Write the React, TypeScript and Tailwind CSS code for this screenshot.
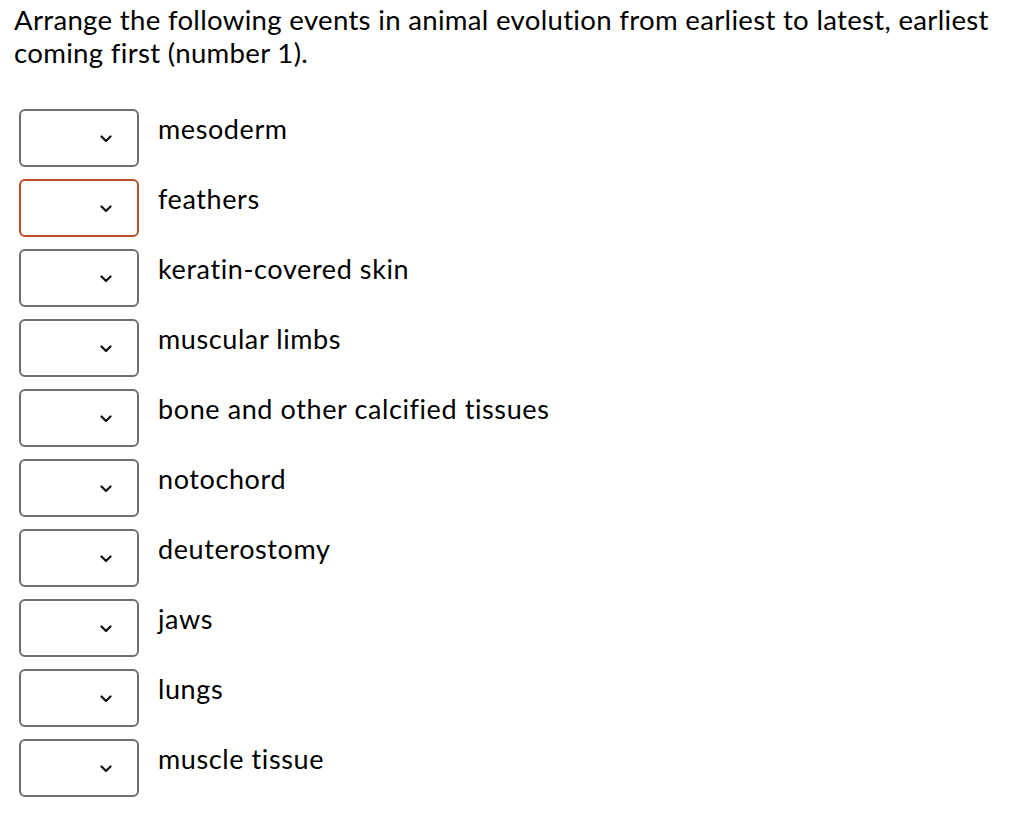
import React from "react";

const items = [
  "mesoderm",
  "feathers",
  "keratin-covered skin",
  "muscular limbs",
  "bone and other calcified tissues",
  "notochord",
  "deuterostomy",
  "jaws",
  "lungs",
  "muscle tissue",
];

function Chevron() {
  return (
    <svg width="12" height="8" viewBox="0 0 12 8" className="block">
      <path d="M1.5 1.5 L6 6 L10.5 1.5" fill="none" stroke="#111" strokeWidth="2.2" strokeLinecap="round" strokeLinejoin="round" />
    </svg>
  );
}

export default function App() {
  return (
    <div className="w-[1024px] h-[822px] bg-white text-black font-['Lato',sans-serif] [font-variant-ligatures:none]">
      <div className="pl-[14px] pt-[3px] text-[27.6px] leading-[33px] tracking-[0.3px] pr-[10px]">
        Arrange the following events in animal evolution from earliest to latest, earliest coming first (number 1).
      </div>
      <div className="mt-[40px] flex flex-col gap-[12px] pl-[19px]">
        {items.map((t, i) => (
          <div key={t} className="flex items-start">
            <div
              className={`w-[120px] h-[58px] rounded-[6px] border-2 flex items-center justify-end pr-[25px] pt-[2px] ${i === 1 ? "border-[#b8502e]" : "border-[#6f6f6f]"}`}
            >
              <Chevron />
            </div>
            <div className="ml-[19px] mt-[3px] text-[27px] leading-[33px] tracking-[0.6px]">{t}</div>
          </div>
        ))}
      </div>
    </div>
  );
}
